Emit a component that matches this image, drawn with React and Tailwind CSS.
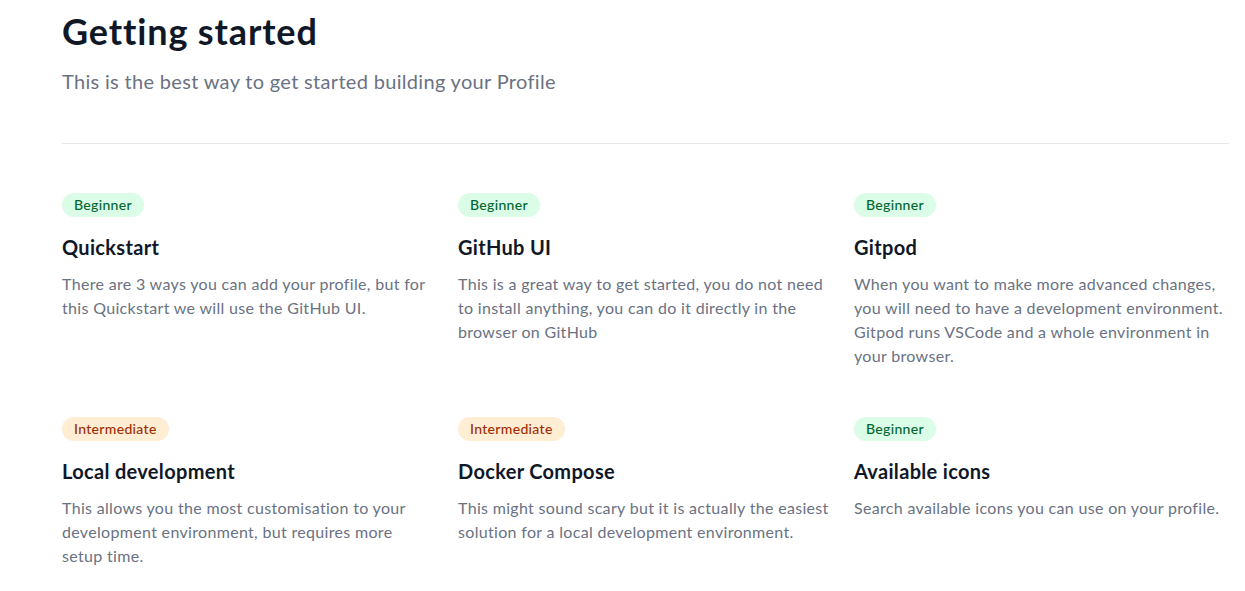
import React from "react";

const guides = [
  {
    level: "Beginner",
    title: "Quickstart",
    text: "There are 3 ways you can add your profile, but for this Quickstart we will use the GitHub UI.",
  },
  {
    level: "Beginner",
    title: "GitHub UI",
    text: "This is a great way to get started, you do not need to install anything, you can do it directly in the browser on GitHub",
  },
  {
    level: "Beginner",
    title: "Gitpod",
    text: "When you want to make more advanced changes, you will need to have a development environment. Gitpod runs VSCode and a whole environment in your browser.",
  },
  {
    level: "Intermediate",
    title: "Local development",
    text: "This allows you the most customisation to your development environment, but requires more setup time.",
  },
  {
    level: "Intermediate",
    title: "Docker Compose",
    text: "This might sound scary but it is actually the easiest solution for a local development environment.",
  },
  {
    level: "Beginner",
    title: "Available icons",
    text: "Search available icons you can use on your profile.",
  },
];

function Badge({ level }) {
  const cls =
    level === "Beginner"
      ? "bg-green-100 text-green-800"
      : "bg-orange-100 text-orange-800";
  return (
    <span className={`inline-flex items-center rounded-full px-3 py-0.5 text-sm font-medium leading-5 ${cls}`}>
      {level}
    </span>
  );
}

export default function App() {
  return (
    <div className="min-h-screen bg-white pl-[62px] pr-[16px] pt-[11px] font-['Lato',sans-serif] tracking-[0.02em]">
      {/* Header */}
      <h1 className="text-4xl font-bold leading-10 tracking-[0.024em] text-gray-900">Getting started</h1>
      <p className="mt-4 text-xl leading-7 text-gray-500">
        This is the best way to get started building your Profile
      </p>

      <hr className="mt-12 border-gray-200" />

      {/* Guides */}
      <div className="mt-12 grid grid-cols-3 gap-x-[21px] gap-y-12">
        {guides.map((g) => (
          <div key={g.title}>
            <Badge level={g.level} />
            <h3 className="mt-4 text-xl font-bold leading-7 text-gray-900">{g.title}</h3>
            <p className="mt-[11px] text-base leading-6 text-gray-500">{g.text}</p>
          </div>
        ))}
      </div>
    </div>
  );
}
